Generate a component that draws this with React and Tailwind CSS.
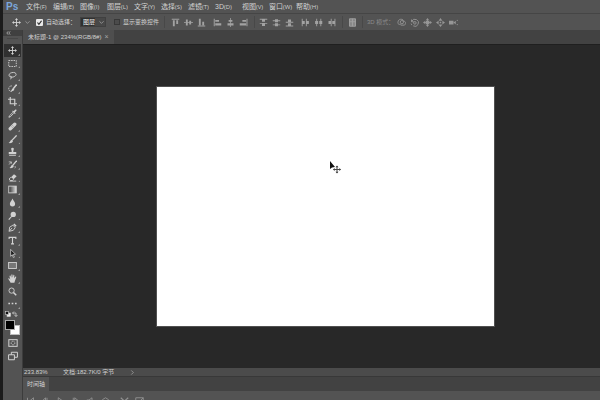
import clsx from 'clsx'

const MENUS = [
  ['文件', '(F)'], ['编辑', '(E)'], ['图像', '(I)'], ['图层', '(L)'], ['文字', '(Y)'], ['选择', '(S)'],
  ['滤镜', '(T)'], ['3D', '(D)'], ['视图', '(V)'], ['窗口', '(W)'], ['帮助', '(H)'],
]

const Icon = ({ children, className = 'size-[10px]' }) => (
  <svg viewBox="0 0 12 12" fill="none" stroke="currentColor" strokeWidth="1.2" className={clsx('shrink-0', className)} aria-hidden="true">
    {children}
  </svg>
)

const MovePath = () => (
  <>
    <path d="M6 2v8M2 6h8" />
    <path d="M6 0l2 2.6H4zM6 12l2-2.6H4zM0 6l2.6-2v4zM12 6L9.400 4v4z" fill="currentColor" stroke="none" />
  </>
)

const TOOLS = [
  { name: '移动工具', art: <MovePath /> },
  { name: '矩形选框工具', art: <rect x="1" y="2" width="10" height="8" strokeDasharray="2 1.2" /> },
  { name: '套索工具', art: <path d="M3.400 8C.8 7 .6 4.500 3 3c2.500-1.500 6.500-1.500 7.600.5S9 8 5.500 8.200C3 8.300 2.500 7 3.500 6.800S5 8.500 3.500 11" /> },
  {
    name: '快速选择工具',
    art: (
      <>
        <path d="M5 2.500C2 2.500 1 4.500 1 6.500s1.500 3.500 4 3.500" strokeDasharray="1.600 1" />
        <path d="M11.500.8L7 6.200" strokeWidth="2" />
        <path d="M7 5.600c-1.800 0-1.500 2.600-3.400 4 2.800.6 5-.6 4.700-2.800z" fill="currentColor" stroke="none" />
      </>
    ),
  },
  { name: '裁剪工具', art: <path d="M3 0v9h9M0 3h9v9" strokeWidth="1.500" /> },
  {
    name: '吸管工具',
    art: (
      <>
        <path d="M6.500 4.500L1.800 9.200l-.6 1.800 1.800-.6 4.700-4.700" />
        <path d="M5.500 3l3.700 3.700 1-1L9 4.500l2-2C12 1 11-.2 9.500 1l-2 2-1-1z" fill="currentColor" stroke="none" />
      </>
    ),
  },
  {
    name: '污点修复画笔工具',
    art: (
      <>
        <path d="M3 9l6-6" strokeWidth="4.500" strokeLinecap="round" />
        <path d="M4.500 6l1.500 1.500M6 4.500L7.500 6" stroke="#535353" strokeWidth=".7" />
      </>
    ),
  },
  {
    name: '画笔工具',
    art: (
      <>
        <path d="M11.500.5L5.500 6.800" strokeWidth="1.700" />
        <path d="M5 6.200C2.800 6.500 3.500 9 .8 10.800 4 11.500 6.800 10 6.600 7.800z" fill="currentColor" stroke="none" />
      </>
    ),
  },
  { name: '仿制图章工具', art: <path d="M6 1C4 1 3.800 2.800 4.700 4l.3 2.500H1V9.500h10v-3H7L7.300 4C8.200 2.800 8 1 6 1zM1.500 10.500h9v1h-9z" fill="currentColor" stroke="none" /> },
  {
    name: '历史记录画笔工具',
    art: (
      <>
        <path d="M11.500 1L6.500 7" strokeWidth="1.600" />
        <path d="M6 6.400c-2.200.3-1.500 2.600-4 4.400 3 .6 5.800-.6 5.500-2.800z" fill="currentColor" stroke="none" />
        <path d="M1 2.500h3.500v2.500M4.500 2.500L1.500 6M9 8c1 1 1 2 0 3" strokeWidth="1" />
      </>
    ),
  },
  {
    name: '橡皮擦工具',
    art: (
      <>
        <path d="M4 5.500l4-4 3.500 2.800-4 4z" fill="currentColor" stroke="none" />
        <path d="M4 5.500L1.500 8l1.500 2h3l1.500-1.700M2 10.800h9" />
      </>
    ),
  },
  {
    name: '渐变工具',
    art: (
      <>
        <defs>
          <linearGradient id="ramp">
            <stop offset="0" stopColor="#303030" />
            <stop offset="1" stopColor="#dedede" />
          </linearGradient>
        </defs>
        <rect x="1" y="1.500" width="10" height="9" fill="url(#ramp)" />
      </>
    ),
  },
  { name: '模糊工具', art: <path d="M6 .5C5 3.200 2.500 5 2.500 7.800a3.500 3.500 0 007 0C9.500 5 7 3.200 6 .5z" fill="currentColor" stroke="none" /> },
  {
    name: '减淡工具',
    art: (
      <>
        <circle cx="7" cy="4.500" r="3.500" fill="currentColor" stroke="none" />
        <path d="M5 7l-4 4.500" strokeWidth="1.500" />
      </>
    ),
  },
  {
    name: '钢笔工具',
    art: (
      <>
        <path d="M1.500 11l.7-5.500L6.500 3l3.200 3L7 9.800zM1.500 11l4-4.500" />
        <path d="M7 2l1.500-1.500 3 3L10 5z" fill="currentColor" stroke="none" />
      </>
    ),
  },
  { name: '横排文字工具', art: <path d="M1.500 4V1.800h9V4M6 2v8.500M4 10.500h4" strokeWidth="1.500" /> },
  { name: '路径选择工具', art: <path d="M3.500.5v9.200l2.200-2 1.500 3.800 1.300-.6L7 7.200l3-.2z" fill="#1d1d1d" strokeWidth="1" /> },
  { name: '矩形工具', art: <rect x=".8" y="2" width="10.400" height="8" fill="#777" /> },
  { name: '抓手工具', art: <path d="M3.500 11.500L.5 6.800c-.5-1 .8-1.500 1.500-.6L3 7.200 2 3c0-1 1.200-1.200 1.500-.3L4.400 5l.1-3.700C4.600.2 5.900.2 6 1.300L6.200 5l.9-3.300c.3-1 1.500-.7 1.400.3L8.200 5.500 9.700 3.700c.6-.8 1.600-.2 1.300.7L9.300 9l-.8 2.500z" fill="currentColor" stroke="none" /> },
  {
    name: '缩放工具',
    art: (
      <>
        <circle cx="4.800" cy="4.800" r="3.500" />
        <path d="M7.300 7.300L11 11" strokeWidth="2" />
      </>
    ),
  },
  { name: '编辑工具栏', art: <path d="M.5 6h2.200M4.900 6h2.200M9.300 6h2.200" strokeWidth="2.200" /> },
]

const ALIGN_EDGES = [
  ['顶对齐', 'M1 1h10v1.300H1zM2.500 3h2.500v8H2.500zM7 3h2.500v5H7z'],
  ['垂直居中对齐', 'M0 5.500h12v1H0zM2.500 2h2.500v8H2.500zM7 3.500h2.500v5H7z'],
  ['底对齐', 'M1 10h10v1.300H1zM2.500 1h2.500v8.500H2.500zM7 5h2.500v4.500H7z'],
]
const ALIGN_SIDES = [
  ['左对齐', 'M1 1h1.300v10H1zM3 2.500h5v2.500H3zM3 7h8v3H3z'],
  ['水平居中对齐', 'M5.500 0h1v12h-1zM3.500 2.500h5v2.500h-5zM2 7h8v3H2z'],
  ['右对齐', 'M10 1h1.300v10H10zM4.500 2.500h5v2.500h-5zM1 7h8.500v3H1z'],
]
const SPREAD_ROWS = [
  ['按顶分布', 'M1 1h10v1.200H1zM4 2h4v3H4zM1 6.500h10v1.200H1zM4 7.500h4v3H4z'],
  ['垂直居中分布', 'M1 3h10v1.200H1zM4 1.500h4v4H4zM1 8.500h10v1.200H1zM4 7h4v4H4z'],
  ['按底分布', 'M1 5h10v1.200H1zM4 2h4v3H4zM1 10h10v1.200H1zM4 7h4v3H4z'],
]
const SPREAD_COLS = [
  ['按左分布', 'M1 1h1.200v10H1zM2 4h3v4H2zM6.500 1h1.200v10H6.500zM7.500 4h3v4h-3z'],
  ['水平居中分布', 'M3 1h1.200v10H3zM1.500 4h4v4h-4zM8.500 1h1.200v10H8.500zM7 4h4v4H7z'],
  ['按右分布', 'M5 1h1.200v10H5zM2 4h3v4H2zM10 1h1.200v10H10zM7 4h3v4H7z'],
]

const MODES = [
  { name: '旋转 3D 对象', art: <><path d="M8 2.500C5 .5 1 2.500 1.500 5.500M1.500 5.500C0 7.500 3 9 5 8.500M8 3.500c4 1 4 4 2 6H5" /><circle cx="6.500" cy="5.500" r="2.200" /></> },
  { name: '滚动 3D 对象', art: <><path d="M2 2v3h3M2.300 4.500a4.700 4.700 0 112 6M1.500 7.500l1 2" /><circle cx="6.500" cy="6.500" r="1.700" /></> },
  { name: '拖动 3D 对象', art: <><MovePath /><rect x="3.500" y="3.500" width="5" height="5" fill="currentColor" stroke="none" /></> },
  { name: '滑动 3D 对象', art: <path d="M6 0l2.500 3.500h-5zM6 12l2.500-3.500h-5zM0 6l3.500-2.500v5zM12 6L8.500 3.500v5zM5 5h2v2H5z" fill="currentColor" stroke="none" /> },
  { name: '缩放 3D 对象', art: <><path d="M0 3.500h6v5H0zM6 6l3-2.500v5z" fill="currentColor" stroke="none" /><path d="M11 2.500v1.500M11 8v1.500" /></> },
]

const PLAYBACK = [
  ['转到第一帧', 'M2 1v10M10 1L4 6l6 5z'],
  ['上一帧', 'M8 1v10M6 1L1 6l5 5z'],
  ['播放', 'M3 1l7 5-7 5z'],
  ['下一帧', 'M3 1v10M5 1l6 5-6 5z'],
  ['音频', 'M1 4h3l4-3v10L4 8H1z'],
  ['设置', 'M6 1l4 2.500v5L6 11 2 8.500v-5z'],
]

const GlyphGroup = ({ items, className }) => (
  <div className={clsx('flex gap-1', className)}>
    {items.map(([name, d]) => (
      <button key={name} type="button" aria-label={name} className="text-[#a2a2a2]">
        <Icon className="size-[9px]">
          <path d={d} fill="currentColor" stroke="none" />
        </Icon>
      </button>
    ))}
  </div>
)

const Divider = ({ className }) => <span className={clsx('h-3 w-px shrink-0 bg-[#484848]', className)} />

const MenuBar = () => (
  <header className="flex h-[13px] shrink-0 items-center bg-[#535353] pl-[3px]">
    <span className="w-[17px] text-[10px] leading-[10px] font-bold text-[#7ba7dc]">Ps</span>
    <nav className="flex pl-[3px]">
      {MENUS.map(([label, key]) => (
        <button key={label} type="button" className="flex w-[27px] items-center leading-[10px] whitespace-nowrap">
          <span className="text-[7px]">{label}</span>
          <span className="font-['Open_Sans',sans-serif] text-[6px]">{key}</span>
        </button>
      ))}
    </nav>
  </header>
)

const OptionsBar = () => (
  <div className="flex h-[17px] shrink-0 items-center overflow-hidden border-t border-[#454545] bg-[#535353] pl-[9px] text-[6px] leading-2 whitespace-nowrap">
    <Icon className="size-[9px]"><MovePath /></Icon>
    <Icon className="ml-1 size-[5px]"><path d="M1 3l5 5 5-5" /></Icon>
    <label className="ml-[6px] flex w-[44px] items-center">
      <span className="relative mr-[3px] flex">
        <input type="checkbox" defaultChecked className="peer size-[7px] appearance-none rounded-[1px] bg-[#e8e8e8]" />
        <Icon className="pointer-events-none absolute inset-0 hidden size-[7px] text-[#2a2a2a] peer-checked:block">
          <path d="M2.500 6l2.500 3 4.500-6" strokeWidth="2" />
        </Icon>
      </span>
      自动选择：
    </label>
    <div className="relative flex w-[26px] items-center">
      <select aria-label="自动选择" className="h-[10px] w-full appearance-none border border-[#404040] bg-[#484848] bg-linear-to-r from-[#303030] from-60% to-transparent to-60% pl-[2px] text-[6px] leading-2 text-[#f0f0f0]">
        <option>图层</option>
        <option>组</option>
      </select>
      <Icon className="pointer-events-none absolute right-[2px] size-[5px]"><path d="M1 3l5 5 5-5" /></Icon>
    </div>
    <label className="ml-2 flex w-[50px] items-center gap-[3px]">
      <input type="checkbox" className="size-[6px] appearance-none border border-[#383838] bg-[#4b4b4b]" />
      显示变换控件
    </label>
    <Divider />
    <GlyphGroup items={ALIGN_EDGES} className="ml-[6px]" />
    <GlyphGroup items={ALIGN_SIDES} className="ml-[7px]" />
    <Divider className="ml-[6px]" />
    <GlyphGroup items={SPREAD_ROWS} className="ml-[4px]" />
    <GlyphGroup items={SPREAD_COLS} className="ml-[7px]" />
    <Divider className="ml-[6px]" />
    <button type="button" aria-label="自动对齐图层" className="mx-[5px] text-[#a2a2a2]">
      <Icon className="size-[9px]"><path d="M2 1h8v10H2zM6 1v10M2 5h8" fill="#888" /></Icon>
    </button>
    <Divider />
    <span className="ml-[4px] w-[30px] text-[#8c8c8c]">3D 模式：</span>
    <div className="flex gap-1 text-[#969696]">
      {MODES.map(mode => (
        <button key={mode.name} type="button" aria-label={mode.name}>
          <Icon className="size-[9px]">{mode.art}</Icon>
        </button>
      ))}
    </div>
  </div>
)

const Toolbox = () => (
  <aside className="flex w-5 shrink-0 flex-col border-r border-[#3c3c3c] bg-[#535353]">
    <div className="flex h-[6px] items-center bg-[#404040] pl-[3px]">
      <Icon className="h-1 w-[5px]"><path d="M5 1L1 6l4 5M11 1L7 6l4 5" strokeWidth="2" /></Icon>
    </div>
    <div className="mx-1 mt-[2px] mb-[5px] h-px bg-[#474747]" />
    <div className="flex h-[266px] flex-col">
      {TOOLS.map((tool, i) => (
        <button
          key={tool.name}
          type="button"
          aria-label={tool.name}
          className={clsx('relative mx-px flex flex-1 items-center justify-center', i === 0 && 'bg-[#303030]')}
        >
          <Icon className="size-[9px]">{tool.art}</Icon>
          {i !== 19 && <span className="absolute right-px bottom-px size-[2px] bg-[#9a9a9a] [clip-path:polygon(100%_0,100%_100%,0_100%)]" />}
        </button>
      ))}
    </div>
    <div className="mt-px flex justify-between pr-1 pl-[2px]">
      <button type="button" aria-label="默认前景色和背景色">
        <Icon className="size-[6px]">
          <rect x="4" y="4" width="7" height="7" fill="#eee" />
          <rect x="1" y="1" width="6" height="6" fill="#111" />
        </Icon>
      </button>
      <button type="button" aria-label="切换前景色和背景色">
        <Icon className="size-[6px]"><path d="M4 1L1 4l3 3M1 4h7v7M5 8l3 3 3-3" strokeWidth="1.500" /></Icon>
      </button>
    </div>
    <div className="relative mt-[3px] ml-[2px] h-[15px] w-[15px]">
      <button type="button" aria-label="背景色" className="absolute right-0 bottom-0 size-[10px] border border-[#bdbdbd] bg-white" />
      <button type="button" aria-label="前景色" className="absolute top-0 left-0 size-[10px] border border-[#aaa] bg-black" />
    </div>
    <div className="mt-[3px] flex flex-col items-center gap-[3px]">
      <button type="button" aria-label="以快速蒙版模式编辑">
        <Icon>
          <rect x="1" y="2" width="10" height="8" />
          <circle cx="6" cy="6" r="2.200" strokeDasharray="1 .7" />
        </Icon>
      </button>
      <button type="button" aria-label="更改屏幕模式">
        <Icon>
          <path d="M4 1.500h7.300v6H4z" />
          <path d="M.7 4.500h7v6h-7z" fill="#535353" />
        </Icon>
      </button>
    </div>
  </aside>
)

const Workspace = () => (
  <main className="relative flex min-h-0 flex-1 border-t border-[#1f1f1f] bg-[#282828] pt-[42px] pr-[106px] pb-[42px] pl-[134px]">
    <div className="relative flex-1 bg-white outline outline-[#6b6b6b]/60">
      <svg viewBox="0 0 12 13" className="absolute top-[74px] left-[172px] h-[13px] w-3" aria-hidden="true">
        <path d="M1 0v8l2-1.500L6 6z" fill="#111" />
        <path d="M8 5v7M4.500 8.500h7" stroke="#444" strokeWidth="1" />
        <path d="M8 4.500l1.500 1.700h-3zM8 12.500l1.500-1.700h-3zM4 8.500L5.700 7v3zM12 8.500L10.300 7v3z" fill="#444" />
      </svg>
    </div>
  </main>
)

const Timeline = () => (
  <section className="shrink-0">
    <div className="flex h-[15px] border-t border-[#383838] bg-[#424242]">
      <button type="button" className="bg-[#535353] px-1 text-[6px] leading-[14px]">时间轴</button>
    </div>
    <div className="flex h-[9px] gap-[6px] overflow-hidden bg-[#535353] pt-[6px] pl-[3px] text-[#929292]">
      {PLAYBACK.map(([name, d]) => (
        <button key={name} type="button" aria-label={name} className="h-[9px]">
          <Icon className="size-[9px]"><path d={d} /></Icon>
        </button>
      ))}
      <button type="button" aria-label="在播放头处拆分" className="ml-1 h-[9px]">
        <Icon className="size-[9px]"><path d="M1 1l9 8M11 1L2 9" strokeWidth="1.500" /></Icon>
      </button>
      <button type="button" aria-label="过渡效果" className="h-[9px]">
        <Icon className="size-[9px]"><path d="M1 1h10v10H1zM11 1L1 11" /></Icon>
      </button>
    </div>
  </section>
)

export default function App() {
  return (
    <div className="flex h-screen flex-col overflow-hidden border-l-[3px] border-[#1b1b1b] bg-[#535353] font-['Liberation_Sans','Noto_Sans_CJK_SC',sans-serif] text-[#d2d2d2]">
      <MenuBar />
      <OptionsBar />
      <div className="flex min-h-0 flex-1">
        <Toolbox />
        <div className="flex min-w-0 flex-1 flex-col">
          <div className="flex h-[14px] shrink-0 bg-[#424242]">
            <div className="flex items-center gap-[3px] bg-[#4e4e4e] px-[5px] text-[6px] whitespace-nowrap">
              <span>未标题-1 @ 234%(RGB/8#)</span>
              <button type="button" aria-label="关闭" className="text-[7px] text-[#a8a8a8]">×</button>
            </div>
          </div>
          <Workspace />
          <footer className="flex h-2 shrink-0 items-center bg-[#4b4b4b] pl-px text-[6px] leading-2">
            <span className="w-[39px]">233.83%</span>
            <span className="w-[67px]">文档:182.7K/0 字节</span>
            <button type="button" aria-label="状态栏选项">
              <Icon className="size-[5px]"><path d="M3 1l5 5-5 5" /></Icon>
            </button>
          </footer>
          <Timeline />
        </div>
      </div>
    </div>
  )
}
